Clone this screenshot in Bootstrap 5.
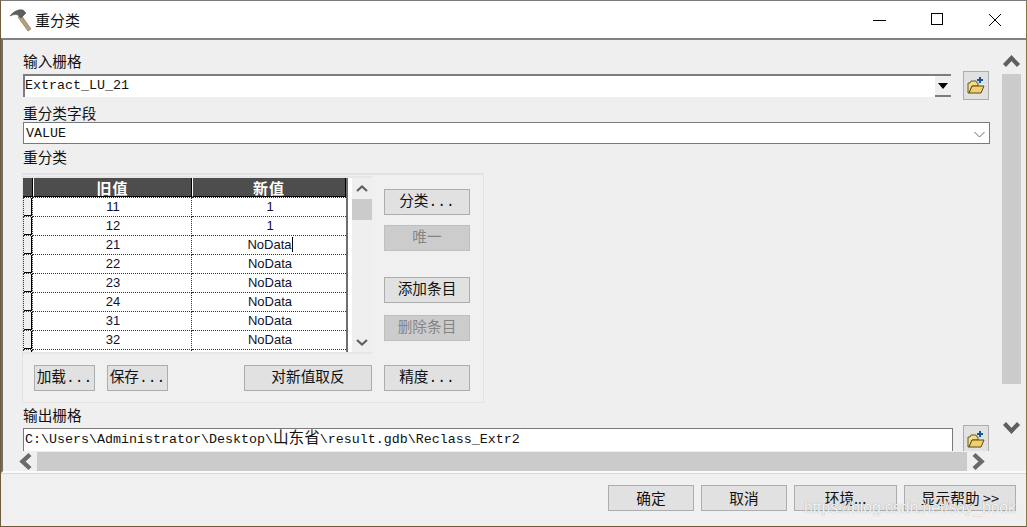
<!DOCTYPE html>
<html lang="zh">
<head>
<meta charset="utf-8">
<title>重分类</title>
<link href="https://cdn.jsdelivr.net/npm/bootstrap@5.3.0/dist/css/bootstrap.min.css" rel="stylesheet">
<style>
html,body{margin:0;height:527px;overflow:hidden;background:#efefef}
body{font:14.67px/19px "Noto Sans CJK SC","Liberation Sans",sans-serif;color:#111}
.dlg{width:1027px;height:527px;border:1px solid #6f5c3e;border-top-color:#7b7b7b;border-right-color:#8a7440}
.ttl{height:37px;background:#fff;flex:none;font-size:15px}
.ttl-text{margin-left:2px;color:#111}
.ctrl{width:58px;height:37px}
.pane{height:435px;flex:none;border-top:2px solid #808080;border-left:2px solid #6e6e6e;border-bottom:2px solid #fbfbfb;background:#efefef}
.main{width:999px;flex:none;height:433px}
.clip{height:411px;overflow:hidden;padding:12px 0 0 20px;flex:none}
.lbl{height:19px}
.lbl-up{line-height:17px}
.srow{height:29px}
.field{font:13.33px/20px "Liberation Mono","Noto Sans CJK SC",monospace;background:#fff;color:#111;border-radius:0;padding:0 2px;white-space:nowrap;box-shadow:none}
.cjk{font-size:15.6px}
.f-in{width:912px;height:23px;border:0;border-top:2px solid #7d7d7d;border-left:2px solid #7d7d7d;padding:0;line-height:20px}
.ddbtn{width:16px;height:23px;background:#efefef;border-top:2px solid #7d7d7d;border-bottom:2px solid #7d7d7d}
.ddbtn i{display:block;width:0;height:0;border:5px solid transparent;border-top:6px solid #000;border-bottom:0}
.folder{width:26px;height:29px;margin-left:12px;background:#e1e1e1;border:1px solid #adadad;border-radius:0;padding:0}
.f-sel{width:967px;height:22px;border:1px solid #7a7a7a;margin-bottom:4px;padding:2px 0 0 2px}
.grp{width:462px;height:230px;margin:6px 0 0 -1px;border:2px solid #e3e3e3;border-left-width:1px;border-right-width:1px;border-bottom-width:1px;background:#f0f0f0;padding:1px 0 0 0}
.gridwrap{height:178px;width:349px;border-top:2px solid #e6e6e6;border-bottom:2px solid #e6e6e6;overflow:hidden;background:#fff;flex:none}
.gridbox{width:325px;height:174px;overflow:hidden;background:#fff;border-right:2px solid #6f6f6f;flex:none;margin-right:4px}
.vb{width:20px;flex:none;background:#efefef}
.thumb1{height:21px;background:#cbcbcb}
.arrow{display:block;flex:none}
.tb{margin:0;table-layout:fixed;width:323px;--bs-table-bg:transparent;border-collapse:separate;border-spacing:0}
.tb th{height:19px;padding:2px 0 0;background:#4d4d4d;color:#fff;font:700 15px/16px "Noto Sans CJK SC",sans-serif;letter-spacing:1px;text-align:center;border:0;border-right:1px solid #000;border-left:1px solid #fff;border-bottom:1px solid #000;box-sizing:border-box;overflow:visible}
.tb th:first-child{border-left:0;border-right:1px solid #000}
.tb td{height:19px;padding:1px 0 0 2px;font:13px/16px "Liberation Sans",Arial,sans-serif;color:#101030;text-align:center;background:#fff;border:0;border-bottom:1px dotted #333;border-right:1px dotted #333;box-sizing:border-box}
.tb tbody tr:first-child td{height:20px;border-top:1px dotted #333}
.tb td:last-child{border-right:0}
.tb td.rh{background:#efefef;border-left:1px dotted #333;box-shadow:inset -1px -1px 0 #000}
.caret-line{display:inline-block;width:1px;height:15px;background:#000;vertical-align:-3px}
.wbtn{--bs-btn-padding-y:0;--bs-btn-padding-x:0;--bs-btn-border-radius:0;--bs-btn-font-size:14.67px;--bs-btn-color:#111;--bs-btn-bg:#e1e1e1;--bs-btn-border-color:#adadad;--bs-btn-hover-bg:#e1e1e1;--bs-btn-hover-color:#111;--bs-btn-hover-border-color:#adadad;--bs-btn-disabled-bg:#cccccc;--bs-btn-disabled-color:#858585;--bs-btn-disabled-border-color:#bfbfbf;--bs-btn-disabled-opacity:1;height:26px;font-family:"Liberation Mono","Noto Sans CJK SC",monospace;line-height:22px;white-space:nowrap}
.side{width:86px;margin-left:12px;flex:none;padding-top:13px}
.side .wbtn{width:86px;display:block}
.g10{margin-top:10px}.g12{margin-top:12px}.g26{margin-top:26px}
.tools{padding:11px 0 0 11px;gap:12px}
.w61{width:61px}.w128{width:128px;margin-left:64px}.w86b{width:86px;margin:11px 0 0 12px}
.f-out{width:930px;height:23px;border:1px solid #7a7a7a;border-bottom:0;padding-left:1px;margin-top:3px}
.lbl-out{margin-top:2px}
.hbar{height:20px;flex:none;padding-left:15px;padding-top:1px}
.htrack{width:930px;height:19px;background:#cbcbcb;margin:0 5px}
.vbar{width:19px;flex:none;padding-top:13px}
.vtrack{height:310px;background:#cbcbcb;margin:6px 0}
.foot{height:53px;flex:none;background:#f0f0f0;padding:11px 0 0 607px;gap:7px;border-top:1px solid #d8d8d8}
.foot .wbtn{font-family:"Noto Sans CJK SC",sans-serif}
.mark-wm{position:absolute;left:803px;top:497px;font:15.7px/20px "Liberation Sans",Arial,sans-serif;color:rgba(255,255,255,.9);text-shadow:0 0 1px rgba(110,110,110,.7);pointer-events:none;white-space:nowrap}
</style>
</head>
<body>
<div class="dlg d-flex flex-column position-relative">
  <div class="ttl d-flex align-items-center">
    <svg class="ms-2" width="24" height="24" viewBox="0 0 24 24" aria-hidden="true"><path d="M9 9 L19 23 L22 21 L12 7Z" fill="#b3a07f" stroke="#857357" stroke-width=".7"/><path d="M1 8 C4 4 9 1 14 2 L17 5 L12 10 L9 7 C6 6 3 7 1 8Z" fill="#5e5e5e" stroke="#3d3d3d" stroke-width=".5"/></svg>
    <span class="ttl-text">重分类</span>
    <div class="ms-auto d-flex" style="margin-right:2px">
      <div class="ctrl d-flex align-items-center justify-content-center"><svg width="14" height="14" viewBox="0 0 14 14"><path d="M1 7.5H14" stroke="#000"/></svg></div>
      <div class="ctrl d-flex align-items-center justify-content-center"><svg width="13" height="13" viewBox="0 0 13 13"><rect x=".5" y=".5" width="11" height="11" fill="none" stroke="#000"/></svg></div>
      <div class="ctrl d-flex align-items-center justify-content-center"><svg width="14" height="14" viewBox="0 0 14 14"><path d="M1 1L13 13M13 1L1 13" stroke="#000" fill="none"/></svg></div>
    </div>
  </div>
  <div class="pane d-flex">
    <div class="main d-flex flex-column">
      <div class="clip">
        <div class="lbl lbl-up">输入栅格</div>
        <div class="srow d-flex align-items-center">
          <div class="field f-in">Extract_LU_21</div>
          <div class="ddbtn d-flex align-items-center justify-content-center"><i></i></div>
          <button class="btn folder d-flex align-items-center justify-content-center" type="button" aria-label="打开">
            <svg width="18" height="19" viewBox="0 0 18 19"><path d="M1 17V7h2l1-2h5l1 2h1v3H5L2 17z" fill="#f3dc8c" stroke="#6a5a1a"/><path d="M2 17l3-7h12l-3 7z" fill="#f0d070" stroke="#5d4c10"/><path d="M13 1v6M10 4h6" stroke="#14559c" stroke-width="2"/></svg>
          </button>
        </div>
        <div class="lbl" style="margin-top:3px">重分类字段</div>
        <div class="field f-sel d-flex align-items-center justify-content-between">
          <span>VALUE</span>
          <svg class="me-1" width="11" height="7" viewBox="0 0 11 7"><path d="M.5 1L5.5 6L10.5 1" fill="none" stroke="#666"/></svg>
        </div>
        <div class="lbl lbl-up">重分类</div>
        <div class="grp">
          <div class="d-flex">
            <div class="d-flex gridwrap">
              <div class="gridbox">
                <table class="table tb">
                  <colgroup><col style="width:10px"><col style="width:159px"><col style="width:154px"></colgroup>
                  <thead><tr><th></th><th>旧值</th><th>新值</th></tr></thead>
                  <tbody>
                    <tr><td class="rh"></td><td>11</td><td>1</td></tr>
                    <tr><td class="rh"></td><td>12</td><td>1</td></tr>
                    <tr><td class="rh"></td><td>21</td><td>NoData<span class="caret-line"></span></td></tr>
                    <tr><td class="rh"></td><td>22</td><td>NoData</td></tr>
                    <tr><td class="rh"></td><td>23</td><td>NoData</td></tr>
                    <tr><td class="rh"></td><td>24</td><td>NoData</td></tr>
                    <tr><td class="rh"></td><td>31</td><td>NoData</td></tr>
                    <tr><td class="rh"></td><td>32</td><td>NoData</td></tr>
                    <tr><td class="rh"></td><td></td><td></td></tr>
                  </tbody>
                </table>
              </div>
              <div class="vb d-flex flex-column">
                <svg class="arrow" width="20" height="21" viewBox="0 0 20 21"><path d="M5 13L10 8.5L15 13" fill="none" stroke="#5f5f5f" stroke-width="2.2"/></svg>
                <div class="thumb1"></div>
                <svg class="arrow mt-auto" width="20" height="21" viewBox="0 0 20 21"><path d="M5 9L10 13.5L15 9" fill="none" stroke="#5f5f5f" stroke-width="2.2"/></svg>
              </div>
            </div>
            <div class="side">
              <button class="btn wbtn" type="button">分类...</button>
              <button class="btn wbtn g10" type="button" disabled>唯一</button>
              <button class="btn wbtn g26" type="button">添加条目</button>
              <button class="btn wbtn g12" type="button" disabled>删除条目</button>
            </div>
          </div>
          <div class="d-flex">
            <div class="tools d-flex">
              <button class="btn wbtn w61" type="button">加载...</button>
              <button class="btn wbtn w61" type="button">保存...</button>
              <button class="btn wbtn w128" type="button">对新值取反</button>
            </div>
            <button class="btn wbtn w86b" type="button">精度...</button>
          </div>
        </div>
        <div class="lbl lbl-out">输出栅格</div>
        <div class="srow d-flex align-items-start" style="margin-top:1px">
          <div class="field f-out">C:\Users\Administrator\Desktop\<span class="cjk">山东省</span>\result.gdb\Reclass_Extr2</div>
          <button class="btn folder d-flex align-items-center justify-content-center" type="button" style="margin-left:10px" aria-label="打开">
            <svg width="18" height="19" viewBox="0 0 18 19"><path d="M1 17V7h2l1-2h5l1 2h1v3H5L2 17z" fill="#f3dc8c" stroke="#6a5a1a"/><path d="M2 17l3-7h12l-3 7z" fill="#f0d070" stroke="#5d4c10"/><path d="M13 1v6M10 4h6" stroke="#14559c" stroke-width="2"/></svg>
          </button>
        </div>
      </div>
      <div class="hbar d-flex align-items-center">
        <svg class="arrow" width="14" height="19" viewBox="0 0 14 19"><path d="M12 2.5L4.5 9.5L12 16.5" fill="none" stroke="#6a6a6a" stroke-width="4.4"/></svg>
        <div class="htrack"></div>
        <svg class="arrow" width="14" height="19" viewBox="0 0 14 19"><path d="M2 2.5L9.5 9.5L2 16.5" fill="none" stroke="#6a6a6a" stroke-width="4.4"/></svg>
      </div>
    </div>
    <div class="vbar d-flex flex-column">
      <svg class="arrow" width="19" height="15" viewBox="0 0 19 15"><path d="M2.5 12.5L9.5 5L16.5 12.5" fill="none" stroke="#5f5f5f" stroke-width="4.2"/></svg>
      <div class="vtrack"></div>
      <svg class="arrow" width="19" height="15" viewBox="0 0 19 15" style="margin-top:31px"><path d="M2.5 2.5L9.5 10L16.5 2.5" fill="none" stroke="#5f5f5f" stroke-width="4.2"/></svg>
    </div>
  </div>
  <div class="foot d-flex">
    <button class="btn wbtn" type="button" style="width:86px">确定</button>
    <button class="btn wbtn" type="button" style="width:86px">取消</button>
    <button class="btn wbtn" type="button" style="width:103px">环境...</button>
    <button class="btn wbtn" type="button" style="width:112px">显示帮助 &gt;&gt;</button>
  </div>
  <div class="mark-wm">https://blog.csdn.net/say_book</div>
</div>
<script src="https://cdn.jsdelivr.net/npm/bootstrap@5.3.0/dist/js/bootstrap.bundle.min.js"></script>
</body>
</html>
